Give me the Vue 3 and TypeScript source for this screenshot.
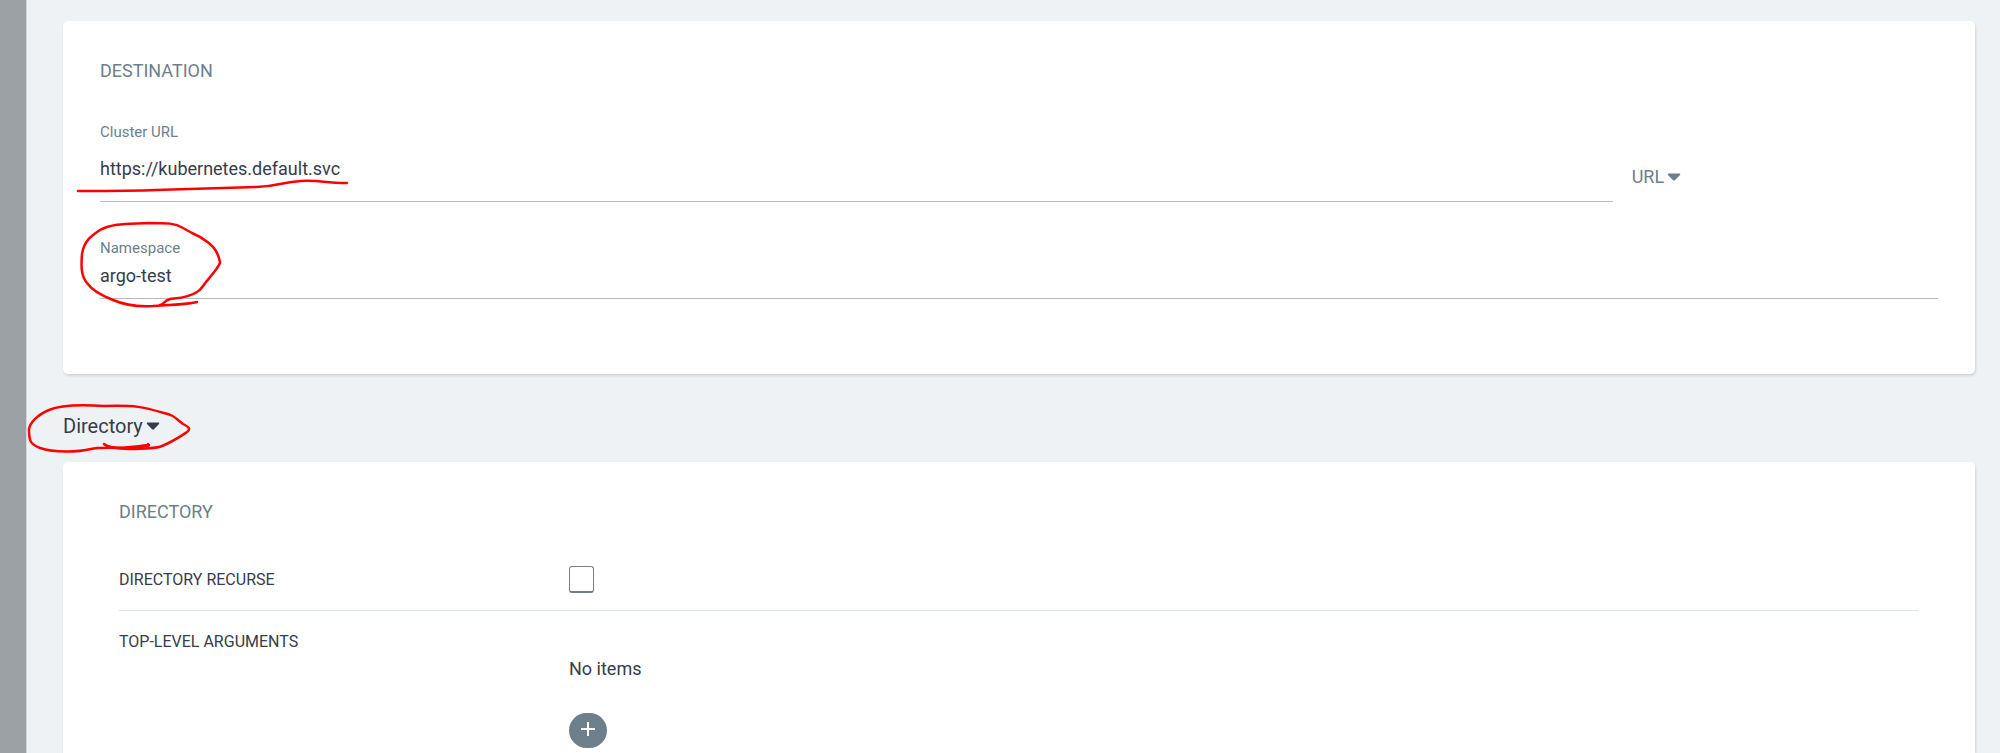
<script setup lang="ts">
import { ref } from 'vue'

const clusterUrl = ref('https://kubernetes.default.svc')
const namespace = ref('argo-test')
const destinationKind = ref('URL')
const sourceType = ref('Directory')
const recurse = ref(false)
const topLevelArguments = ref<string[]>([])

function addArgument(): void {
  topLevelArguments.value.push('')
}
</script>

<template>
  <div class="page">
    <div class="backdrop"></div>
    <main class="panel">
      <section class="card destination">
        <h2 class="title">DESTINATION</h2>
        <div class="cluster-row">
          <div class="field cluster">
            <label for="cluster">Cluster URL</label>
            <input id="cluster" v-model="clusterUrl" type="text" />
            <svg class="mark mark-url" width="276" height="18" viewBox="0 0 276 18" aria-hidden="true">
              <path d="M2 12 C40 12 60 12 80 11 C120 10 150 9 180 8 C205 7 205 3 225 2 C245 1 255 5 271 4" />
            </svg>
          </div>
          <div class="picker kind">
            <select v-model="destinationKind" aria-label="Destination type">
              <option>URL</option>
              <option>NAME</option>
            </select>
            <svg class="caret" width="14" height="8" viewBox="0 0 14 8" aria-hidden="true">
              <path d="M1.500 0.500H12.500Q14 0.700 13 2L8.200 7Q7 8 5.800 7L1 2Q0 0.700 1.500 0.500Z" />
            </svg>
          </div>
        </div>
        <div class="field namespace">
          <label for="namespace">Namespace</label>
          <input id="namespace" v-model="namespace" type="text" />
          <svg class="mark mark-namespace" width="144" height="88" viewBox="0 0 144 88" aria-hidden="true">
            <path d="M117 81 C105 84 85 84 73 85 C55 86 42 83 33 79 C20 74 12 69 7 62 C1 55 1 45 2 33 C4 20 11 15 20 9 C33 2 48 3 68 2 C88 2 95 2 103 7 L112 12 C124 17 134 25 137 32 C140 39 140 41 140 42 C138 47 131 55 126 61 C122 66 121 69 117 71 C108 77 98 77 90 78 C84 80 84 83 80 84" />
          </svg>
        </div>
      </section>

      <div class="picker source">
        <select v-model="sourceType" aria-label="Source type">
          <option>Directory</option>
          <option>Helm</option>
          <option>Kustomize</option>
          <option>Plugin</option>
        </select>
        <svg class="caret" width="14" height="8" viewBox="0 0 14 8" aria-hidden="true">
          <path d="M1.500 0.500H12.500Q14 0.700 13 2L8.200 7Q7 8 5.800 7L1 2Q0 0.700 1.500 0.500Z" />
        </svg>
        <svg class="mark mark-source" width="166" height="52" viewBox="0 0 166 52" aria-hidden="true">
          <path d="M77 39 C83 45 108 43 121 41 M121 41 Q123 40 121 39 M121 40 C108 42 100 42 91 43" />
          <path d="M80 41 C85 44 96 44 108 44 C121 43 128 44 135 41 C147 36 154 31 160 27 C164 24 162 22 156 19 C148 13 147 10 137 8 C116 2 109 0 77 1 C46 -1 31 1 22 5 C10 10 3 18 2 24 C2 36 3 39 13 43 C27 48 52 47 64 44 C72 42 83 43 94 43" />
        </svg>
      </div>

      <section class="card directory">
        <h2 class="title">DIRECTORY</h2>
        <div class="row recurse-row">
          <label for="recurse">DIRECTORY RECURSE</label>
          <div class="value">
            <input id="recurse" v-model="recurse" type="checkbox" />
          </div>
        </div>
        <div class="row">
          <span class="name">TOP-LEVEL ARGUMENTS</span>
          <div class="value arguments">
            <p v-if="topLevelArguments.length === 0">No items</p>
            <p v-else>{{ topLevelArguments.length }} items</p>
            <button type="button" aria-label="Add argument" @click="addArgument">
              <svg width="14" height="14" viewBox="0 0 14 14" aria-hidden="true">
                <path d="M7 0V14M0 7H14" />
              </svg>
            </button>
          </div>
        </div>
      </section>
    </main>
  </div>
</template>

<style>
body {
  margin: 0;
  background: #eef2f5;
}
</style>

<style scoped>
.page {
  display: flex;
  min-height: 100vh;
  font-family: Roboto, "Liberation Sans", sans-serif;
  font-size: 18px;
  line-height: 24px;
  color: #363c4a;
}

.backdrop {
  flex: none;
  width: 26px;
  background: #9ba0a4;
  border-right: 1px solid #d3d8db;
}

.panel {
  flex: 1;
  display: flex;
  flex-direction: column;
  min-width: 0;
  padding: 21px 25px 0 36px;
}

.card {
  background: #fff;
  border-radius: 5px;
  box-shadow: 1px 2px 3px rgba(0, 0, 0, 0.12);
}

.destination {
  padding: 38px 37px 75px;
}

.title {
  margin: 0;
  font-size: 18px;
  font-weight: 400;
  line-height: 24px;
  color: #6d7f8b;
}

.cluster-row {
  display: grid;
  grid-template-columns: 5fr 1fr;
  margin-top: 39px;
}

.field {
  position: relative;
  display: flex;
  flex-direction: column;
}

.field label {
  font-size: 15px;
  line-height: 20px;
  color: #6d7f8b;
}

.field input {
  width: 100%;
  box-sizing: border-box;
  margin: 0;
  padding: 0;
  border: 0;
  border-bottom: 1px solid #b9bcbe;
  outline: none;
  background: none;
  font: inherit;
  color: inherit;
}

.cluster {
  margin-right: 19px;
}

.cluster input {
  height: 60px;
  padding-bottom: 6px;
}

.namespace {
  margin-top: 36px;
}

.namespace input {
  height: 41px;
  padding-bottom: 6px;
}

.picker {
  position: relative;
  display: flex;
  align-items: center;
  align-self: flex-start;
  gap: 3px;
}

.picker select {
  appearance: none;
  field-sizing: content;
  margin: 0;
  padding: 0;
  border: 0;
  outline: none;
  background: none;
  font: inherit;
  color: inherit;
}

.caret {
  flex: none;
  fill: currentColor;
  pointer-events: none;
}

.kind {
  margin-top: 43px;
  color: #6d7f8b;
}

.source {
  margin: 40px 0 24px;
  font-size: 20px;
}

.directory {
  flex: 1;
  padding: 38px 56px 5px;
  border-radius: 5px 5px 0 0;
}

.row {
  display: grid;
  grid-template-columns: 1fr 3fr;
  font-size: 16px;
}

.recurse-row {
  align-items: center;
  margin-top: 30px;
  padding: 12px 0 17px;
  border-bottom: 1px solid #dee6eb;
}

.value {
  display: flex;
}

.value input {
  appearance: none;
  box-sizing: border-box;
  width: 25px;
  height: 27px;
  margin: 0;
  border: 1px solid #7c8185;
  border-bottom: 2px solid #6d7f8b;
  border-radius: 3px;
  background: #fff;
}

.value input:checked {
  background: #6d7f8b;
}

.name {
  padding-top: 19px;
}

.arguments {
  flex-direction: column;
  align-items: flex-start;
  padding-top: 46px;
  font-size: 18px;
}

.arguments p {
  margin: 0 0 32px;
}

.arguments button {
  display: flex;
  align-items: center;
  justify-content: center;
  width: 38px;
  height: 35px;
  padding: 0 0 3px;
  border: 0;
  border-radius: 18px;
  background: #6d7f8b;
}

.arguments button path {
  stroke: #fff;
  stroke-width: 2;
}

.mark {
  position: absolute;
  overflow: visible;
  fill: none;
  stroke: #f00;
  stroke-width: 2.5;
  stroke-linecap: round;
  stroke-linejoin: round;
  pointer-events: none;
}

.mark-url {
  left: -24px;
  top: 57px;
}

.mark-namespace {
  left: -20px;
  top: -17px;
}

.mark-source {
  left: -36px;
  top: -9px;
}
</style>
